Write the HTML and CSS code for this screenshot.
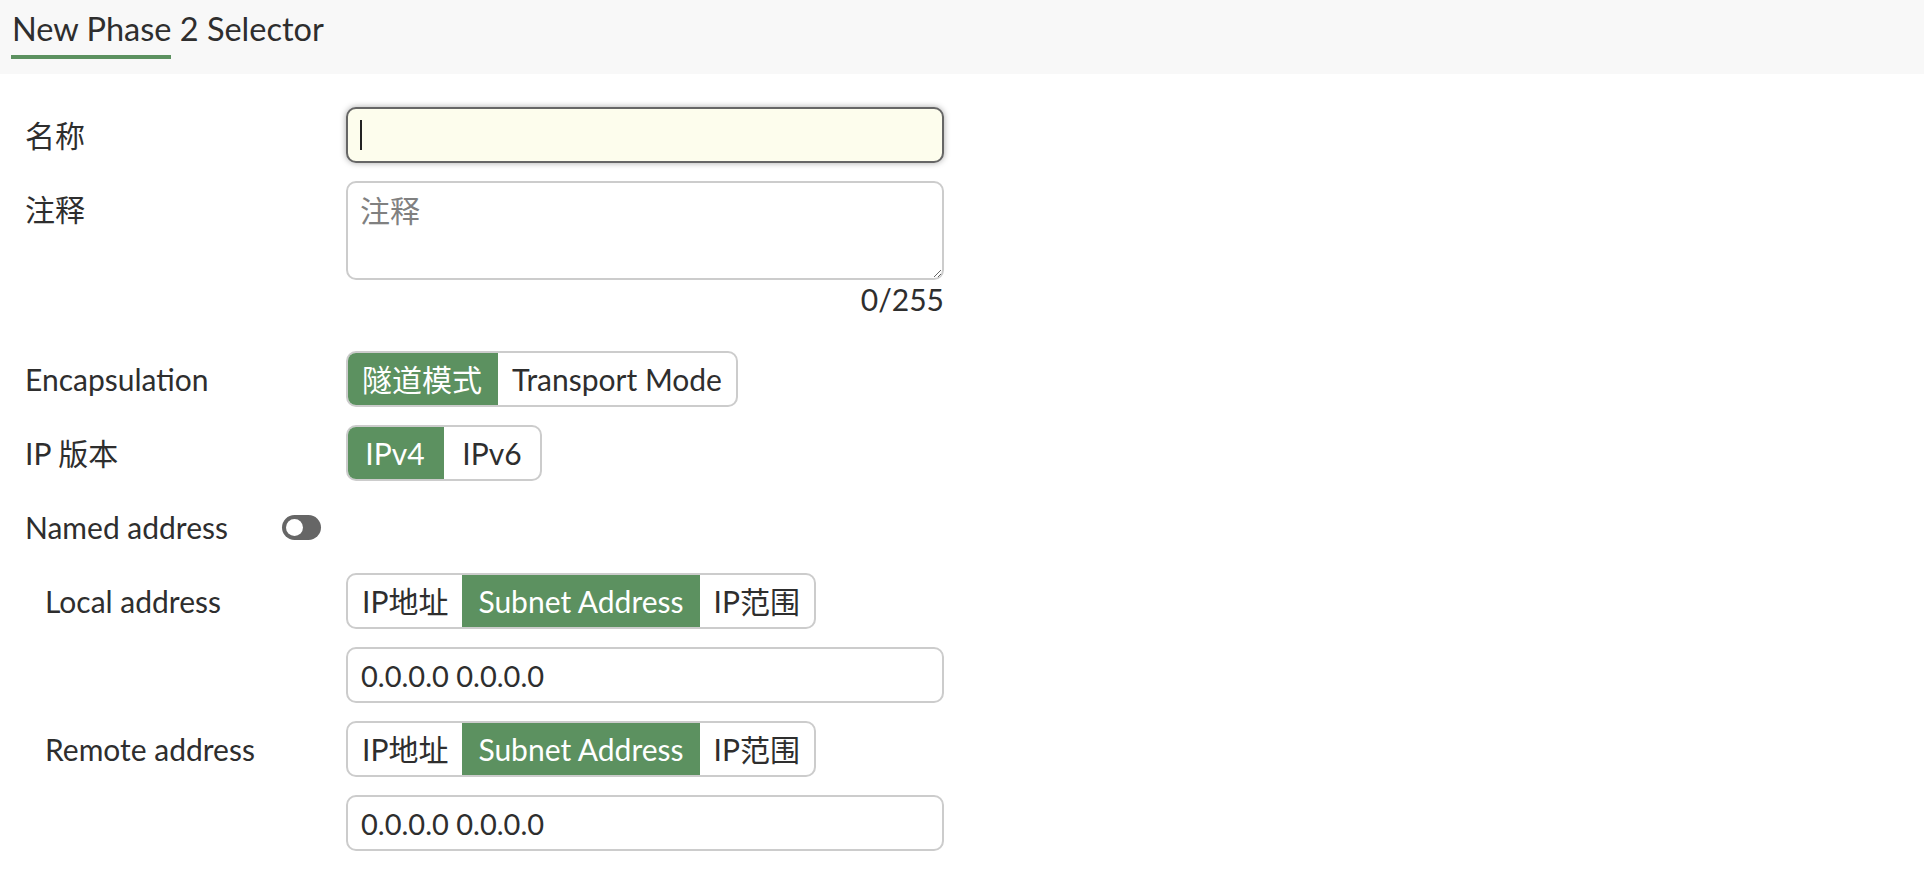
FILE: index.html
```html
<!DOCTYPE html>
<html lang="zh">
<head>
	<meta charset="UTF-8">
	<title>New Phase 2 Selector</title>
	<link rel="stylesheet" href="styles.css">
</head>
<body>
	<div class="head">
		<div class="head-title">New Phase 2 Selector</div>
		<div class="head-line"></div>
	</div>

	<div class="form">
		<div class="row">
			<label class="label">名称</label>
			<div class="field field-focus"><span class="caret"></span></div>
		</div>

		<div class="row">
			<label class="label">注释</label>
			<div class="ctrl">
				<textarea class="memo" placeholder="注释"></textarea>
				<div class="count">0/255</div>
			</div>
		</div>

		<div class="row">
			<label class="label">Encapsulation</label>
			<div class="seg">
				<span class="seg-item on">隧道模式</span>
				<span class="seg-item">Transport Mode</span>
			</div>
		</div>

		<div class="row">
			<label class="label">IP 版本</label>
			<div class="seg">
				<span class="seg-item on">IPv4</span>
				<span class="seg-item">IPv6</span>
			</div>
		</div>

		<div class="row row-toggle">
			<label class="label-inline">Named address</label>
			<span class="toggle"><span class="knob"></span></span>
		</div>

		<div class="row">
			<label class="label sub">Local address</label>
			<div class="seg">
				<span class="seg-item">IP地址</span>
				<span class="seg-item on">Subnet Address</span>
				<span class="seg-item">IP范围</span>
			</div>
		</div>
		<div class="row">
			<span class="label"></span>
			<input class="field" type="text" value="0.0.0.0 0.0.0.0">
		</div>

		<div class="row">
			<label class="label sub">Remote address</label>
			<div class="seg">
				<span class="seg-item">IP地址</span>
				<span class="seg-item on">Subnet Address</span>
				<span class="seg-item">IP范围</span>
			</div>
		</div>
		<div class="row">
			<span class="label"></span>
			<input class="field" type="text" value="0.0.0.0 0.0.0.0">
		</div>
	</div>
</body>
</html>
```

FILE: styles.css
```css
body, div, p, textarea, input{
	margin: 0px;
	padding: 0px;
}
body{
	background: #ffffff;
	color: #2e2e2e;
	font-family: Lato, "Noto Sans CJK SC", sans-serif;
	font-size: 30px;
}
.head{
	height: 74px;
	background: #f8f8f8;
	padding-left: 12px;
	box-sizing: border-box;
	padding-top: 10px;
}
.head-title{
	font-size: 32.5px;
	line-height: 38px;
	color: #2e2e2e;
}
.head-line{
	width: 160px;
	height: 4px;
	background: #5c9160;
	margin-top: 7px;
	margin-left: -1px;
}
.form{
	padding: 33px 0 0 25px;
	display: flex;
	flex-direction: column;
	gap: 18px;
}
.row{
	display: flex;
	align-items: flex-start;
}
.label{
	width: 321px;
	flex: none;
	line-height: 56px;
	height: 56px;
}
.label.sub{
	padding-left: 20px;
	box-sizing: border-box;
}
.ctrl{
	width: 598px;
}
.field{
	width: 598px;
	height: 56px;
	box-sizing: border-box;
	border: 2px solid #cccccc;
	border-radius: 10px;
	background: #ffffff;
	padding: 0 13px;
	font-family: Lato, "Noto Sans CJK SC", sans-serif;
	font-size: 29px;
	color: #2e2e2e;
	outline: none;
}
.field-focus{
	background: #fdfded;
	border-color: #666666;
	box-shadow: 0 0 6px rgba(0, 0, 0, 0.35);
	display: flex;
	align-items: center;
}
.caret{
	width: 2px;
	height: 30px;
	background: #222222;
	margin-left: -1px;
}
.memo{
	display: block;
	width: 598px;
	height: 99px;
	box-sizing: border-box;
	border: 2px solid #cccccc;
	border-radius: 10px;
	padding: 4px 12px;
	font-family: Lato, "Noto Sans CJK SC", sans-serif;
	font-size: 30px;
	color: #2e2e2e;
	resize: vertical;
	outline: none;
}
.memo::placeholder{
	color: #808080;
}
.count{
	text-align: right;
	line-height: 38px;
	padding-bottom: 15px;
}
.seg{
	display: flex;
	height: 56px;
	box-sizing: border-box;
	border: 2px solid #cccccc;
	border-radius: 10px;
	overflow: hidden;
}
.seg-item{
	min-width: 96px;
	box-sizing: border-box;
	text-align: center;
	padding: 0 14px;
	line-height: 52px;
	white-space: nowrap;
}
.seg-item.on{
	background: #5c9160;
	color: #ffffff;
	margin: -2px 0;
	padding: 0 16px;
	line-height: 56px;
}
.seg-item.on:first-child{
	margin-left: -2px;
	min-width: 98px;
}
.row-toggle{
	align-items: center;
	height: 56px;
}
.label-inline{
	width: 257px;
	flex: none;
}
.toggle{
	width: 39px;
	height: 25px;
	border-radius: 13px;
	background: #666666;
	display: flex;
	align-items: center;
	padding-left: 4px;
	box-sizing: border-box;
}
.knob{
	width: 17px;
	height: 17px;
	border-radius: 50%;
	background: #ffffff;
}
```
